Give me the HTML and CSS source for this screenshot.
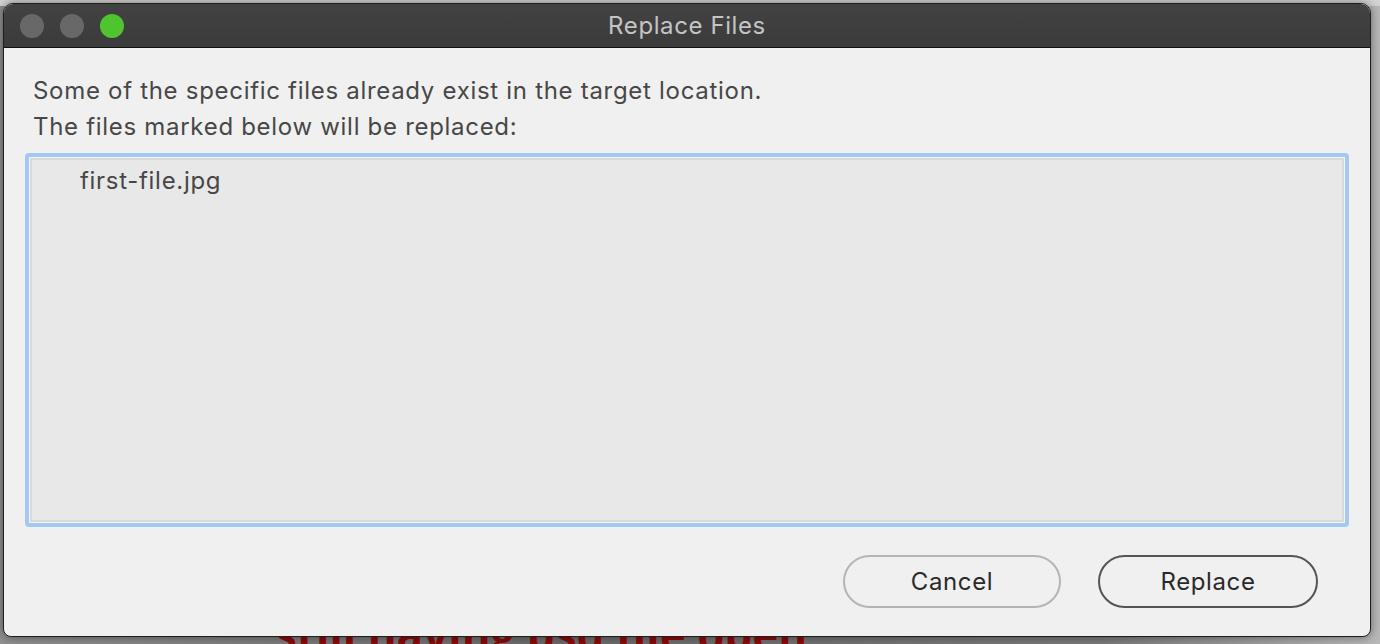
FILE: index.html
```html
<!DOCTYPE html>
<html lang="en">
<head>
<meta charset="utf-8">
<title>Replace Files</title>
<link rel="stylesheet" href="styles.css">
</head>
<body>
<div class="desktop">
  <div class="backdrop-top"></div>
  <div class="backdrop-text">still having psd file open</div>
</div>
<div class="window">
  <div class="titlebar">
    <div class="lights">
      <span class="light light-off"></span>
      <span class="light light-off"></span>
      <span class="light light-zoom"></span>
    </div>
    <div class="title">Replace Files</div>
    <div class="spacer"></div>
  </div>
  <div class="content">
    <p class="message">Some of the specific files already exist in the target location.<br>The files marked below will be replaced:</p>
    <div class="filelist">
      <div class="file-item">first-file.jpg</div>
    </div>
    <div class="actions">
      <button class="btn btn-cancel">Cancel</button>
      <button class="btn btn-default">Replace</button>
    </div>
  </div>
</div>
</body>
</html>
```

FILE: styles.css
```css
html, body {
  margin: 0;
  padding: 0;
}

*, *::before, *::after {
  box-sizing: border-box;
}

body {
  width: 1380px;
  height: 644px;
  overflow: hidden;
  position: relative;
  background: linear-gradient(90deg, #8f8f8f 0%, #6a6a6a 40%, #7a7a7a 80%, #b8b8b8 100%);
  font-family: Inter, "Noto Sans", "Liberation Sans", sans-serif;
}

.desktop {
  position: absolute;
  inset: 0;
}

.backdrop-top {
  height: 6px;
  background: #d3d3d3;
}

.backdrop-text {
  position: absolute;
  left: 275px;
  top: 608px;
  font-family: "Open Sans", "Liberation Sans", sans-serif;
  font-weight: 700;
  font-size: 44px;
  line-height: 52px;
  color: #8a0a0a;
  white-space: nowrap;
}

.window {
  position: absolute;
  left: 3px;
  top: 3px;
  width: 1368px;
  border: 1px solid #1e1e1e;
  border-radius: 10px 10px 8px 8px;
  background: #f0f0f0;
  box-shadow: 0 0 10px rgba(0, 0, 0, 0.45);
  overflow: hidden;
}

.titlebar {
  height: 44px;
  background: linear-gradient(#424242, #3b3b3b);
  border-bottom: 1px solid #111;
  display: grid;
  grid-template-columns: 1fr auto 1fr;
  align-items: center;
}

.lights {
  display: flex;
  gap: 16px;
  padding-left: 16px;
}

.light {
  width: 24px;
  height: 24px;
  border-radius: 50%;
  display: block;
}

.light-off {
  background: #686868;
}

.light-zoom {
  background: #50c42f;
}

.title {
  color: #c4c4c4;
  font-size: 24px;
  letter-spacing: 0.6px;
}

.content {
  padding: 25px 21px 28px;
  display: flex;
  flex-direction: column;
}

.message {
  margin: 0;
  padding-left: 8px;
  font-size: 24px;
  line-height: 36px;
  letter-spacing: 0.7px;
  color: #474747;
}

.filelist {
  margin-top: 8px;
  height: 374px;
  border: 4px solid #a3c8f4;
  border-radius: 4px;
  background: #e8e8e8;
  box-shadow: inset 0 0 0 1px #f4f4f4, inset 0 0 0 3px #d9d9d9;
  padding: 9px 0 0 51px;
}

.file-item {
  font-size: 24px;
  line-height: 30px;
  letter-spacing: 0.7px;
  color: #474747;
}

.actions {
  margin-top: 28px;
  display: flex;
  justify-content: flex-end;
  gap: 37px;
  padding-right: 31px;
}

.btn {
  height: 53px;
  border-radius: 27px;
  background: #f0f0f0;
  font-family: inherit;
  font-size: 24px;
  letter-spacing: 0.6px;
  color: #2a2a2a;
  padding: 0;
}

.btn-cancel {
  width: 218px;
  border: 2px solid #b4b4b4;
}

.btn-default {
  width: 220px;
  border: 2px solid #545454;
}
```
